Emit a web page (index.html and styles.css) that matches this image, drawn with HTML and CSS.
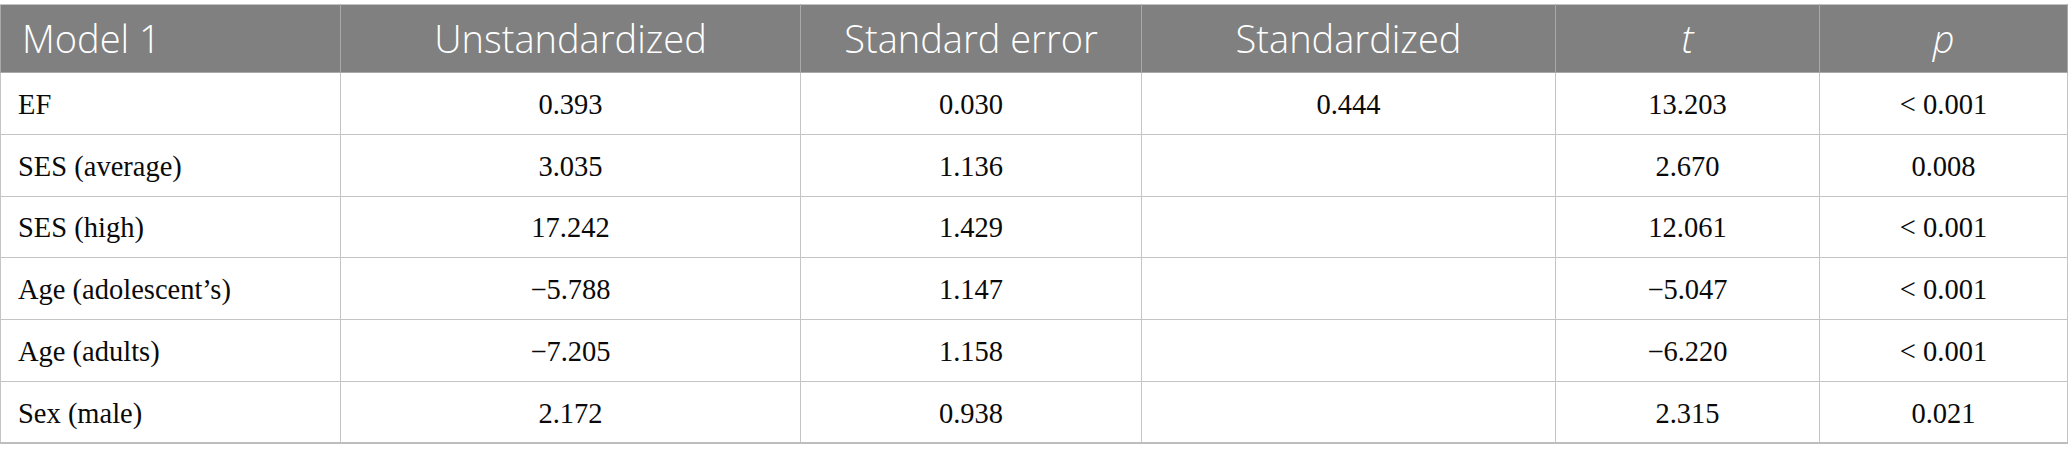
FILE: index.html
```html
<!DOCTYPE html>
<html>
<head>
<meta charset="utf-8">
<link rel="stylesheet" href="styles.css">
</head>
<body>
<table class="stats">
  <colgroup>
    <col class="c1"><col class="c2"><col class="c3"><col class="c4"><col class="c5"><col class="c6">
  </colgroup>
  <thead>
    <tr>
      <th class="left">Model 1</th>
      <th>Unstandardized</th>
      <th>Standard error</th>
      <th>Standardized</th>
      <th><i>t</i></th>
      <th><i>p</i></th>
    </tr>
  </thead>
  <tbody>
    <tr><td class="left">EF</td><td>0.393</td><td>0.030</td><td>0.444</td><td>13.203</td><td>&lt; 0.001</td></tr>
    <tr><td class="left">SES (average)</td><td>3.035</td><td>1.136</td><td></td><td>2.670</td><td>0.008</td></tr>
    <tr><td class="left">SES (high)</td><td>17.242</td><td>1.429</td><td></td><td>12.061</td><td>&lt; 0.001</td></tr>
    <tr><td class="left">Age (adolescent’s)</td><td>−5.788</td><td>1.147</td><td></td><td>−5.047</td><td>&lt; 0.001</td></tr>
    <tr><td class="left">Age (adults)</td><td>−7.205</td><td>1.158</td><td></td><td>−6.220</td><td>&lt; 0.001</td></tr>
    <tr><td class="left">Sex (male)</td><td>2.172</td><td>0.938</td><td></td><td>2.315</td><td>0.021</td></tr>
  </tbody>
</table>
</body>
</html>
```

FILE: styles.css
```css
html, body {
  margin: 0;
  padding: 0;
  background: #ffffff;
}
body {
  padding-top: 4px;
}
.stats {
  border-collapse: collapse;
  table-layout: fixed;
  width: 2067px;
  border: 1px solid #c4c4c4;
  border-bottom: 2px solid #bdbdbd;
}
.c1 { width: 340px; }
.c2 { width: 460px; }
.c3 { width: 341px; }
.c4 { width: 414px; }
.c5 { width: 264px; }
.c6 { width: 248px; }

.stats thead tr {
  height: 68px;
}
.stats tbody tr {
  height: 61.8px;
}
.stats th {
  background: #7f807f;
  color: #ffffff;
  font-family: "Open Sans", "Noto Sans", sans-serif;
  font-weight: 300;
  font-size: 38px;
  line-height: 1.2;
  padding: 0;
  text-align: center;
  vertical-align: middle;
  border: 1px solid #a9a9a9;
  border-top-color: #c4c4c4;
}
.stats td {
  font-family: "Liberation Serif", "Times New Roman", serif;
  font-size: 28.5px;
  line-height: 1.2;
  color: #0a0a0a;
  padding: 3px 0 0;
  text-align: center;
  vertical-align: middle;
  border: 1px solid #c4c4c4;
}
.stats .left {
  text-align: left;
  padding-left: 21px;
}
.stats td.left {
  padding-left: 17px;
}
.stats i {
  font-style: italic;
}
```
